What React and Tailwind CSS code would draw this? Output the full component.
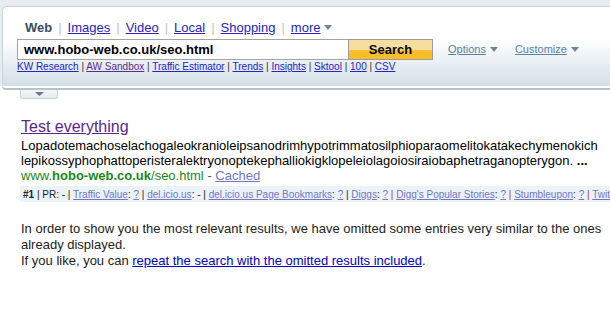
import React from "react";

const Sep = () => <span className="mx-[6px] text-[#bcc6cd]">|</span>;
const Arrow = ({ c = "#6f8396" }) => (
  <svg width="8" height="5" viewBox="0 0 8 5" className="inline-block ml-[4px] align-middle">
    <path d="M0 0 L8 0 L4 5 Z" fill={c} />
  </svg>
);

const L = ({ children, v }) => (
  <a className={"underline " + (v ? "text-[#5b2c8e]" : "text-[#2424c8]")}>{children}</a>
);
const T = ({ children }) => <a className="underline text-[#7474c9]">{children}</a>;

export default function App() {
  return (
    <div className="w-[610px] h-[331px] bg-white overflow-hidden relative" style={{ fontFamily: '"Liberation Sans", Arial, sans-serif' }}>
      {/* header */}
      <div className="bg-[#e7ecef] pt-[6px] pl-[2px]">
        <div className="h-[80px] rounded-tl-[5px] rounded-bl-[4px] border-l border-t border-[#c6d3dc] bg-gradient-to-b from-white from-40% to-[#d3dfe7] shadow-[0_2px_0_#ffffff,0_4px_0_#b7c2c8]">
          <div className="pt-[13px] pl-[22px] flex items-center text-[13px] leading-[15px] text-[#2424c8]">
            <span className="font-bold text-[#3b4d5e]">Web</span>
            <Sep />
            <a className="underline">Images</a>
            <Sep />
            <a className="underline">Video</a>
            <Sep />
            <a className="underline">Local</a>
            <Sep />
            <a className="underline">Shopping</a>
            <Sep />
            <a className="underline">more</a>
            <Arrow />
          </div>
          <div className="mt-[4px] ml-[14px] flex items-center">
            <div className="w-[332px] h-[21px] border border-[#a3a3a3] bg-white flex items-center pl-[6px] text-[13px] font-bold text-black">
              www.hobo-web.co.uk/seo.html
            </div>
            <div className="w-[85px] h-[21px] -ml-[1px] border border-[#9c9c9c] bg-[linear-gradient(#f6df9e_0%,#f6df9e_50%,#fbbe2a_50%,#fbbe2a_100%)] flex items-center justify-center text-[13px] font-bold text-black">
              Search
            </div>
            <div className="ml-[15px] flex items-center text-[11px] text-[#5a7ea6]">
              <a className="underline">Options</a>
              <Arrow c="#6d8499" />
            </div>
            <div className="ml-[17px] flex items-center text-[11px] text-[#5a7ea6]">
              <a className="underline">Customize</a>
              <Arrow c="#6d8499" />
            </div>
          </div>
          <div className="mt-[1px] ml-[14px] text-[10px] leading-[12px] text-[#333] whitespace-nowrap">
            <L>KW Research</L> | <L v>AW Sandbox</L> | <L>Traffic Estimator</L> | <L>Trends</L> | <L>Insights</L> | <L>Sktool</L> | <L>100</L> | <L>CSV</L>
          </div>
        </div>
      </div>
      {/* pull tab */}
      <div className="ml-[20px] mt-[4px] w-[38px] h-[9px] bg-gradient-to-b from-[#f3f6f8] to-[#e4ebef] border border-t-0 border-[#c6d3dc] rounded-b-[3px] flex items-start justify-center pt-[2px]">
        <svg width="9" height="4" viewBox="0 0 9 4"><path d="M0 0 L9 0 L4.5 4 Z" fill="#66788a" /></svg>
      </div>

      {/* results */}
      <div className="pl-[21px] mt-[19px]">
        <a className="block text-[16px] leading-[18px] text-[#5a2690] underline">Test everything</a>
        <div className="mt-[2px] text-[13px] leading-[15px] text-black whitespace-nowrap">
          Lopadotemachoselachogaleokranioleipsanodrimhypotrimmatosilphioparaomelitokatakechymenokich
          <br />
          lepikossyphophattoperisteralektryonoptekephalliokigklopeleiolagoiosiraiobaphetraganopterygon. <b>...</b>
        </div>
        <div className="text-[13px] leading-[15px] whitespace-nowrap">
          <span className="text-[#1a881a]">www.<b>hobo-web.co.uk</b>/seo.html</span>
          <span className="text-[#555]"> - </span>
          <a className="underline text-[#7474c9]">Cached</a>
        </div>
      </div>
      <div className="ml-[20px] mt-[3px] h-[16px] bg-[#ebf3f8] pl-[3px] flex items-center text-[10px] text-[#222] whitespace-nowrap overflow-hidden">
        <span>
          <b>#1</b> | PR: - | <T>Traffic Value</T>: <T>?</T> | <T>del.icio.us</T>: - | <T>del.icio.us Page Bookmarks</T>: <T>?</T> | <T>Diggs</T>: <T>?</T> <span className="text-[#a33a3a]">|</span> <T>Digg's Popular Stories</T>: <T>?</T> <span className="text-[#a33a3a]">|</span> <T>Stumbleupon</T>: <T>?</T> <span className="text-[#a33a3a]">|</span> <T>Twitter</T>: <T>?</T>
        </span>
      </div>
      <div className="pl-[21px] mt-[19px] text-[13px] leading-[16px] text-[#222] whitespace-nowrap">
        In order to show you the most relevant results, we have omitted some entries very similar to the ones
        <br />
        already displayed.
        <br />
        If you like, you can <a className="underline text-[#0000cc]">repeat the search with the omitted results included</a>.
      </div>
    </div>
  );
}
